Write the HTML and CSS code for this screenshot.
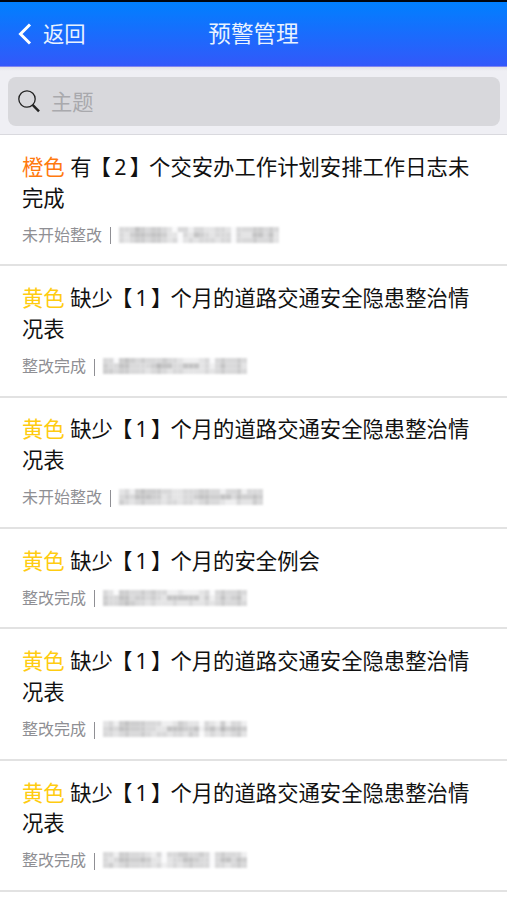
FILE: index.html
```html
<!DOCTYPE html>
<html lang="zh-CN">
<head>
    <meta charset="UTF-8">
    <meta name="viewport" content="width=device-width, initial-scale=1.0">
    <title>预警管理</title>
    <link rel="stylesheet" href="styles.css">
</head>
<body>
    <header class="header">
        <a class="back" href="#">
            <svg class="back-icon" viewBox="0 0 14 22"><path d="M12 1.5 2.5 11 12 20.5"/></svg>
            <span>返回</span>
        </a>
        <h1 class="header-title">预警管理</h1>
    </header>
    <div class="search-bar">
        <label class="search-box">
            <svg class="search-icon" viewBox="0 0 22 23">
                <circle cx="9" cy="9" r="8.2"/>
                <path d="M14.6 14.8 21 21.3"/>
            </svg>
            <input class="search-input" type="text" placeholder="主题">
        </label>
    </div>
    <ul class="list">
        <li class="item">
            <p class="item-title"><span class="orange">橙色</span> 有<span class="count">【<span class="num">2</span>】</span>个交安办工作计划安排工作日志未完成</p>
            <p class="item-meta">未开始整改<span class="line"></span><svg class="mosaic" data-rows="333543443203313322332033344343,324554554220325432333032255352,323443443230232333233033343342"></svg></p>
        </li>
        <li class="item">
            <p class="item-title"><span class="yellow">黄色</span> 缺少<span class="count">【<span class="num">1</span>】</span>个月的道路交通安全隐患整治情况表</p>
            <p class="item-meta">整改完成<span class="line"></span><svg class="mosaic" data-rows="330454343334332111230343343,433553333465533555231353342,443443332343233222232343343"></svg></p>
        </li>
        <li class="item">
            <p class="item-title"><span class="yellow">黄色</span> 缺少<span class="count">【<span class="num">1</span>】</span>个月的道路交通安全隐患整治情况表</p>
            <p class="item-meta">未开始整改<span class="line"></span><svg class="mosaic" data-rows="231454443322333443313341333,343555442322334554455354454,432343332332332343321132243"></svg></p>
        </li>
        <li class="item">
            <p class="item-title"><span class="yellow">黄色</span> 缺少<span class="count">【<span class="num">1</span>】</span>个月的安全例会</p>
            <p class="item-meta">整改完成<span class="line"></span><svg class="mosaic" data-rows="320443343433112111230343343,433553443432555555241353452,433454332322232232232343343"></svg></p>
        </li>
        <li class="item">
            <p class="item-title"><span class="yellow">黄色</span> 缺少<span class="count">【<span class="num">1</span>】</span>个月的道路交通安全隐患整治情况表</p>
            <p class="item-meta">整改完成<span class="line"></span><svg class="mosaic" data-rows="231454443331124322032141331,343554443322555445145364554,332343343233233243023232342"></svg></p>
        </li>
        <li class="item">
            <p class="item-title"><span class="yellow">黄色</span> 缺少<span class="count">【<span class="num">1</span>】</span>个月的道路交通安全隐患整治情况表</p>
            <p class="item-meta">整改完成<span class="line"></span><svg class="mosaic" data-rows="331443332130334433430343331,323554454220233554330355354,342343333231232343330332343"></svg></p>
        </li>
    </ul>
    <script src="script.js"></script>
</body>
</html>
```
FILE: styles.css
```css
* {
    margin: 0;
    padding: 0;
    box-sizing: border-box;
}
body {
    min-height: 100vh;
    background: #fff;
    color: #111;
    font-family: "Noto Sans", "Noto Sans CJK SC", sans-serif;
    overflow: hidden;
}
.header {
    display: grid;
    grid-template-columns: 1fr auto 1fr;
    align-items: center;
    height: 67px;
    padding: 0 18px;
    border-top: 2px solid #00060f;
    border-bottom: 1px solid #8084f0;
    background: linear-gradient(#0080ff, #3358fa);
    color: #e8f2ff;
}
.back {
    display: flex;
    align-items: center;
    gap: 11px;
    color: #e8f2ff;
    font-size: 21.3px;
    line-height: 30px;
    text-decoration: none;
}
.back-icon {
    width: 14px;
    height: 22px;
    fill: none;
    stroke: #fff;
    stroke-width: 3;
}
.header-title {
    font-size: 22.6px;
    font-weight: 400;
    line-height: 30px;
}
.search-bar {
    height: 68px;
    padding: 10px 7px 0 8px;
    border-bottom: 1px solid #d9d9de;
    background: linear-gradient(#e2e2e8, #efeff4 4px);
}
.search-box {
    display: flex;
    align-items: center;
    gap: 11px;
    height: 49px;
    padding-left: 10px;
    border-radius: 8px;
    background: #d8d8dc;
}
.search-icon {
    width: 22px;
    height: 23px;
    fill: none;
    stroke: #222;
    stroke-width: 1.3;
}
.search-icon path {
    stroke-width: 2.4;
}
.search-input {
    flex: 1;
    height: 32px;
    border: none;
    outline: none;
    background: none;
    font-family: inherit;
    font-size: 21.3px;
}
.search-input::placeholder {
    color: #a9a9ad;
}
.list {
    list-style: none;
}
.item {
    padding: 16.8px 22px 17.6px;
    border-bottom: 2px solid #e2e2e2;
}
.item-title {
    font-size: 21.35px;
    line-height: 30.7px;
}
.orange {
    color: #ff7a0f;
}
.yellow {
    color: #ffcc11;
}
.count {
    margin: 0 -2px;
}
.num {
    margin: 0 3.3px;
}
.item-meta {
    display: flex;
    align-items: center;
    height: 24px;
    margin-top: 9.5px;
    color: #8f8f94;
    font-size: 16px;
    line-height: 24px;
}
.line {
    width: 1px;
    height: 17px;
    margin: 2px 8px 0;
    background: #8f8f94;
}
.mosaic {
    height: 16px;
    overflow: visible;
    filter: blur(0.8px);
}
```
FILE: script.js
```js
const cell = 16 / 3;

// each digit is the darkness of one block
document.querySelectorAll(".mosaic").forEach(svg => {
    const rows = svg.dataset.rows.split(",");
    svg.setAttribute("width", rows[0].length * cell);
    rows.forEach((row, y) => {
        [...row].forEach((level, x) => {
            const rect = document.createElementNS("http://www.w3.org/2000/svg", "rect");
            const shade = 250 - level * 11;
            rect.setAttribute("x", x * cell);
            rect.setAttribute("y", y * cell);
            rect.setAttribute("width", cell);
            rect.setAttribute("height", cell);
            rect.setAttribute("fill", `rgb(${shade}, ${shade}, ${shade + 1})`);
            svg.appendChild(rect);
        });
    });
});
```
